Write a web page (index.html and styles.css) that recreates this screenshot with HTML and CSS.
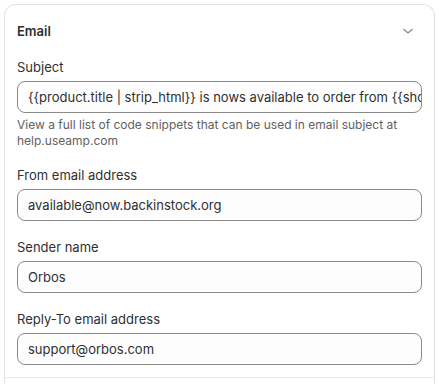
FILE: index.html
```html
<!DOCTYPE html>
<html>
<head>
<meta charset="utf-8">
<link rel="stylesheet" href="styles.css">
</head>
<body>
<div class="card">
  <div class="header">
    <span class="title">Email</span>
    <svg class="chev" width="12" height="12" viewBox="0 0 12 12"><path d="M1.8 4.3 L6 8 L10.2 4.3" fill="none" stroke="#8a8a8a" stroke-width="1.2" stroke-linecap="round" stroke-linejoin="round"/></svg>
  </div>
  <div class="fields">
    <div class="field">
      <label class="label">Subject</label>
      <div class="input"><span class="value">{{product.title | strip_html}} is nows available to order from {{shop.name}}</span></div>
      <div class="help">View a full list of code snippets that can be used in email subject at help.useamp.com</div>
    </div>
    <div class="field">
      <label class="label">From email address</label>
      <div class="input"><span class="value">available@now.backinstock.org</span></div>
    </div>
    <div class="field">
      <label class="label">Sender name</label>
      <div class="input"><span class="value">Orbos</span></div>
    </div>
    <div class="field">
      <label class="label">Reply-To email address</label>
      <div class="input"><span class="value">support@orbos.com</span></div>
    </div>
  </div>
  <div class="divider"></div>
</div>
</body>
</html>
```
FILE: styles.css
```css
html, body { margin: 0; padding: 0; background: #ffffff; }
body {
  font-family: Inter, "Noto Sans", sans-serif;
  color: #303030;
  padding: 4px 4px 0 4px;
  height: 384px;
  box-sizing: border-box;
  overflow: hidden;
}
.card {
  border: 1px solid #e3e3e3;
  border-bottom: none;
  border-radius: 12px 12px 0 0;
  height: 380px;
  box-sizing: border-box;
}
.header {
  display: flex;
  justify-content: space-between;
  align-items: center;
  padding: 16px 20px 0 12px;
  height: 20px;
}
.title { font-size: 13px; font-weight: 600; line-height: 20px; color: #303030; }
.chev { display: block; }
.fields {
  display: flex;
  flex-direction: column;
  gap: 16px;
  padding: 16px 12px 0 12px;
}
.field { display: flex; flex-direction: column; }
.label { font-size: 13px; line-height: 20px; margin-bottom: 4px; color: #303030; }
.input {
  height: 32px;
  box-sizing: border-box;
  border: 1px solid #8a8a8a;
  border-radius: 8px;
  background: #fdfdfd;
  padding: 0 10px;
  display: flex;
  align-items: center;
  overflow: hidden;
  white-space: nowrap;
}
.value { font-size: 13px; color: #303030; }
.help { font-size: 12px; line-height: 16px; color: #616161; margin-top: 4px; }
.divider { height: 1px; background: #ebebeb; margin-top: 12px; }
```
